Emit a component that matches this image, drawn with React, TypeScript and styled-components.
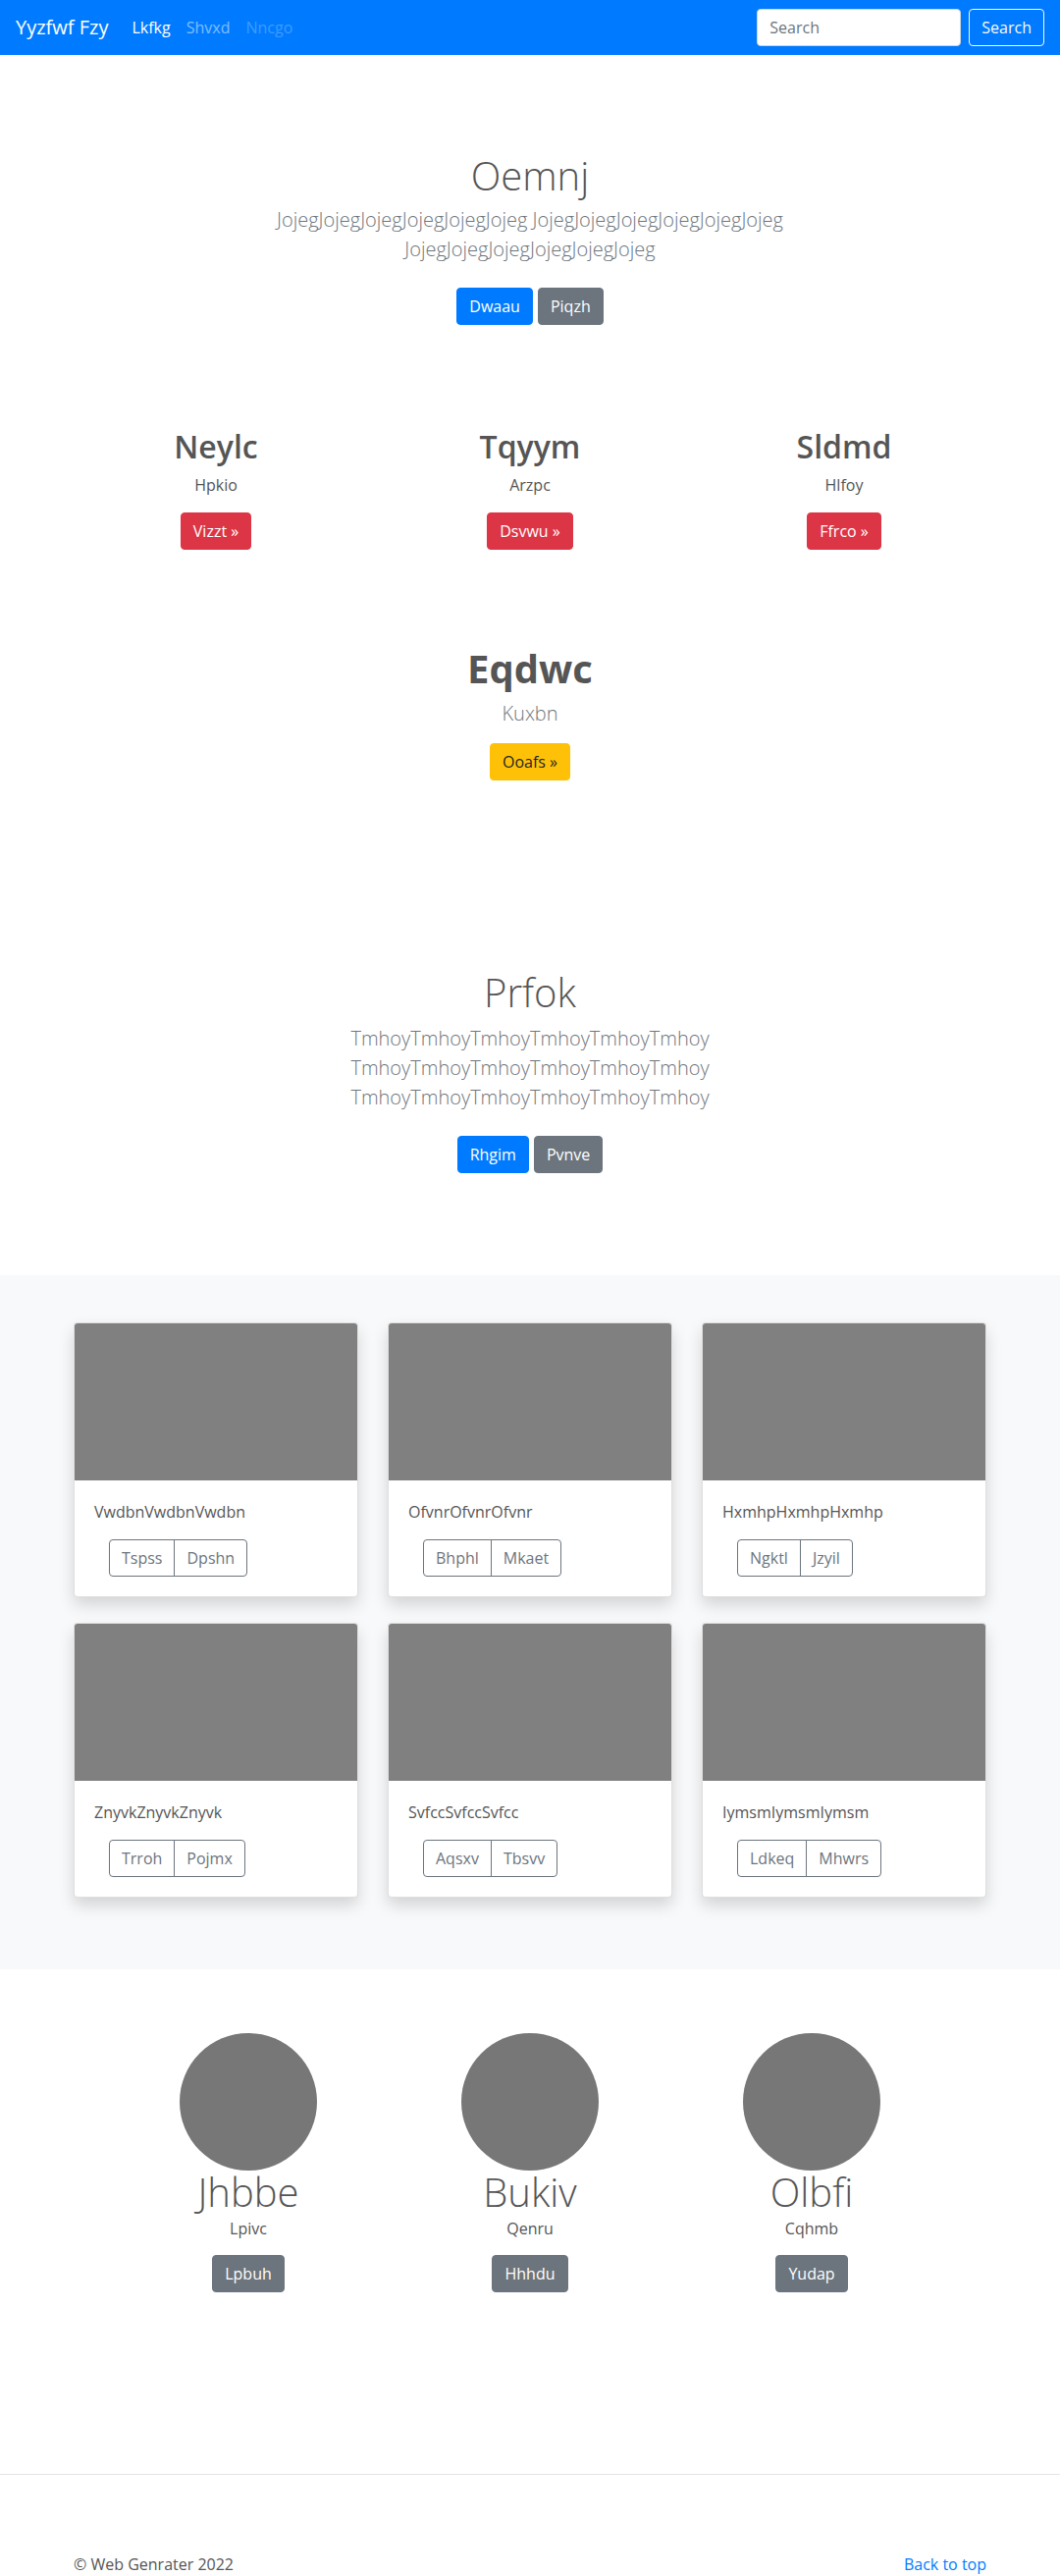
import React from "react";
import styled, { createGlobalStyle, css } from "styled-components";

const GlobalStyle = createGlobalStyle`
  * { box-sizing: border-box; }
  html, body { margin: 0; padding: 0; }
  body {
    font-family: "Segoe UI", "Open Sans", "Noto Sans", Arial, sans-serif;
    font-size: 16px;
    line-height: 1.5;
    color: #555555;
    background: #ffffff;
  }
`;

const Page = styled.div`
  width: 100%;
  min-height: 2624px;
  overflow: hidden;
`;

/* ---------- Navbar ---------- */
const Navbar = styled.nav`
  height: 56px;
  background: #007bff;
  display: flex;
  align-items: center;
  padding: 8px 16px;
`;

const Brand = styled.a`
  font-size: 20px;
  line-height: 30px;
  color: #ffffff;
  margin-right: 16px;
  text-decoration: none;
`;

const NavLinks = styled.div`
  display: flex;
  flex: 1;
`;

const NavLink = styled.a<{ $state?: "active" | "normal" | "disabled" }>`
  padding: 8px;
  font-size: 16px;
  text-decoration: none;
  color: ${(p) =>
    p.$state === "active"
      ? "#ffffff"
      : p.$state === "disabled"
      ? "rgba(255,255,255,0.25)"
      : "rgba(255,255,255,0.5)"};
`;

const SearchForm = styled.form`
  display: flex;
  align-items: center;
  gap: 8px;
`;

const SearchInput = styled.input`
  width: 208px;
  height: 38px;
  padding: 6px 12px;
  font-family: inherit;
  font-size: 16px;
  color: #495057;
  border: 1px solid #ced4da;
  border-radius: 4px;
  background: #fff;
  &::placeholder { color: #6c757d; }
`;

const OutlineLightButton = styled.button`
  height: 38px;
  padding: 6px 12px;
  font-family: inherit;
  font-size: 16px;
  line-height: 24px;
  color: #f8f9fa;
  background: transparent;
  border: 1px solid #f8f9fa;
  border-radius: 4px;
`;

/* ---------- Generic ---------- */
const Container = styled.div<{ $narrow?: boolean }>`
  width: ${(p) => (p.$narrow ? "610px" : "930px")};
  margin: 0 auto;
`;

const variants = {
  primary: css`background:#007bff;border-color:#007bff;color:#fff;`,
  secondary: css`background:#6c757d;border-color:#6c757d;color:#fff;`,
  danger: css`background:#dc3545;border-color:#dc3545;color:#fff;`,
  warning: css`background:#ffc107;border-color:#ffc107;color:#212529;`,
};

const Button = styled.a<{ $variant: keyof typeof variants }>`
  display: inline-block;
  height: 38px;
  padding: 6px 12px;
  font-size: 16px;
  line-height: 24px;
  border: 1px solid transparent;
  border-radius: 4px;
  text-decoration: none;
  ${(p) => variants[p.$variant]}
`;

const ButtonRow = styled.div`
  display: flex;
  justify-content: center;
  gap: 5px;
`;

/* ---------- Hero ---------- */
const Hero = styled.section<{ $top: number }>`
  padding-top: ${(p) => p.$top}px;
  text-align: center;
`;

const HeroTitle = styled.h1`
  margin: 0 0 6px;
  font-size: 40px;
  line-height: 48px;
  font-weight: 300;
  color: #555;
`;

const Lead = styled.p<{ $mb?: number }>`
  margin: 0 0 ${(p) => p.$mb ?? 24}px;
  font-size: 20px;
  line-height: 30px;
  font-weight: 300;
  color: #6c757d;
`;

/* ---------- Features ---------- */
const Features = styled.section`
  padding-top: 105px;
`;

const FeatureRow = styled.div`
  display: grid;
  grid-template-columns: repeat(3, 1fr);
  column-gap: 30px;
  text-align: center;
`;

const Feature = styled.div`
  display: flex;
  flex-direction: column;
  align-items: center;
`;

const FeatureTitle = styled.h2`
  margin: 0 0 8px;
  font-size: 32px;
  line-height: 38px;
  font-weight: 600;
  color: #555;
`;

const FeatureText = styled.p`
  margin: 0 0 16px;
  font-size: 16px;
  line-height: 24px;
`;

/* ---------- Highlight ---------- */
const Highlight = styled.section`
  padding-top: 97px;
  text-align: center;
`;

const HighlightTitle = styled.h1`
  margin: 0 0 7px;
  font-size: 40px;
  line-height: 48px;
  font-weight: 700;
  color: #555;
`;

/* ---------- Album ---------- */
const Album = styled.section`
  margin-top: 104px;
  background: #f8f9fa;
  padding: 48px 0 73px;
`;

const CardGrid = styled.div`
  display: grid;
  grid-template-columns: repeat(3, 290px);
  column-gap: 30px;
  row-gap: 26px;
`;

const Card = styled.div`
  background: #fff;
  border: 1px solid rgba(0, 0, 0, 0.125);
  border-radius: 4px;
  overflow: hidden;
  box-shadow: 0 8px 16px rgba(0, 0, 0, 0.15);
  height: 280px;
`;

const CardImage = styled.div`
  height: 160px;
  background: #808080;
`;

const CardBody = styled.div`
  padding: 20px;
`;

const CardText = styled.p`
  margin: 0 0 16px;
  font-size: 16px;
  line-height: 24px;
`;

const BtnGroup = styled.div`
  display: inline-flex;
  margin-left: 15px;
`;

const GroupButton = styled.button`
  height: 38px;
  padding: 6px 12px;
  font-family: inherit;
  font-size: 16px;
  line-height: 24px;
  color: #6c757d;
  background: transparent;
  border: 1px solid #6c757d;
  &:first-child { border-radius: 4px 0 0 4px; }
  &:last-child { border-radius: 0 4px 4px 0; margin-left: -1px; }
`;

/* ---------- Team ---------- */
const Team = styled.section`
  padding-top: 65px;
`;

const TeamGrid = styled.div`
  display: grid;
  grid-template-columns: repeat(3, 287px);
  justify-content: center;
  text-align: center;
`;

const Member = styled.div`
  display: flex;
  flex-direction: column;
  align-items: center;
`;

const Avatar = styled.div`
  width: 140px;
  height: 140px;
  border-radius: 50%;
  background: #777777;
`;

const MemberName = styled.h2`
  margin: 0 0 3px;
  font-size: 40px;
  line-height: 44px;
  font-weight: 300;
  color: #555;
`;

const MemberRole = styled.p`
  margin: 0 0 15px;
  font-size: 16px;
  line-height: 24px;
`;

/* ---------- Footer ---------- */
const Footer = styled.footer`
  margin-top: 185px;
  border-top: 1px solid #e5e5e5;
  padding-top: 79px;
`;

const FooterInner = styled.div`
  display: flex;
  justify-content: space-between;
  font-size: 16px;
  line-height: 24px;
  color: #555;
`;

const FooterLink = styled.a`
  color: #007bff;
  text-decoration: none;
`;

const features = [
  { title: "Neylc", text: "Hpkio", btn: "Vizzt »" },
  { title: "Tqyym", text: "Arzpc", btn: "Dsvwu »" },
  { title: "Sldmd", text: "Hlfoy", btn: "Ffrco »" },
];

const cards = [
  { text: "VwdbnVwdbnVwdbn", a: "Tspss", b: "Dpshn" },
  { text: "OfvnrOfvnrOfvnr", a: "Bhphl", b: "Mkaet" },
  { text: "HxmhpHxmhpHxmhp", a: "Ngktl", b: "Jzyil" },
  { text: "ZnyvkZnyvkZnyvk", a: "Trroh", b: "Pojmx" },
  { text: "SvfccSvfccSvfcc", a: "Aqsxv", b: "Tbsvv" },
  { text: "IymsmIymsmIymsm", a: "Ldkeq", b: "Mhwrs" },
];

const team = [
  { name: "Jhbbe", role: "Lpivc", btn: "Lpbuh" },
  { name: "Bukiv", role: "Qenru", btn: "Hhhdu" },
  { name: "Olbfi", role: "Cqhmb", btn: "Yudap" },
];

const J = "JojegJojegJojegJojegJojegJojeg";
const T = "TmhoyTmhoyTmhoyTmhoyTmhoyTmhoy";

export default function App() {
  return (
    <Page>
      <GlobalStyle />
      <Navbar>
        <Brand href="#">Yyzfwf Fzy</Brand>
        <NavLinks>
          <NavLink $state="active" href="#">Lkfkg</NavLink>
          <NavLink $state="normal" href="#">Shvxd</NavLink>
          <NavLink $state="disabled" href="#">Nncgo</NavLink>
        </NavLinks>
        <SearchForm onSubmit={(e) => e.preventDefault()}>
          <SearchInput placeholder="Search" />
          <OutlineLightButton type="submit">Search</OutlineLightButton>
        </SearchForm>
      </Navbar>

      <Hero $top={99}>
        <Container $narrow>
          <HeroTitle>Oemnj</HeroTitle>
          <Lead $mb={24}>{`${J} ${J} ${J}`}</Lead>
          <ButtonRow>
            <Button $variant="primary" href="#">Dwaau</Button>
            <Button $variant="secondary" href="#">Piqzh</Button>
          </ButtonRow>
        </Container>
      </Hero>

      <Features>
        <Container>
          <FeatureRow>
            {features.map((f) => (
              <Feature key={f.title}>
                <FeatureTitle>{f.title}</FeatureTitle>
                <FeatureText>{f.text}</FeatureText>
                <Button $variant="danger" href="#">{f.btn}</Button>
              </Feature>
            ))}
          </FeatureRow>
        </Container>
      </Features>

      <Highlight>
        <HighlightTitle>Eqdwc</HighlightTitle>
        <Lead $mb={15}>Kuxbn</Lead>
        <Button $variant="warning" href="#">Ooafs »</Button>
      </Highlight>

      <Hero $top={192}>
        <Container $narrow>
          <HeroTitle style={{ marginBottom: 8 }}>Prfok</HeroTitle>
          <Lead $mb={24}>{`${T} ${T} ${T}`}</Lead>
          <ButtonRow>
            <Button $variant="primary" href="#">Rhgim</Button>
            <Button $variant="secondary" href="#">Pvnve</Button>
          </ButtonRow>
        </Container>
      </Hero>

      <Album>
        <Container>
          <CardGrid>
            {cards.map((c) => (
              <Card key={c.text}>
                <CardImage />
                <CardBody>
                  <CardText>{c.text}</CardText>
                  <BtnGroup>
                    <GroupButton type="button">{c.a}</GroupButton>
                    <GroupButton type="button">{c.b}</GroupButton>
                  </BtnGroup>
                </CardBody>
              </Card>
            ))}
          </CardGrid>
        </Container>
      </Album>

      <Team>
        <TeamGrid>
          {team.map((m) => (
            <Member key={m.name}>
              <Avatar />
              <MemberName>{m.name}</MemberName>
              <MemberRole>{m.role}</MemberRole>
              <Button $variant="secondary" href="#">{m.btn}</Button>
            </Member>
          ))}
        </TeamGrid>
      </Team>

      <Footer>
        <Container>
          <FooterInner>
            <span>© Web Genrater 2022</span>
            <FooterLink href="#">Back to top</FooterLink>
          </FooterInner>
        </Container>
      </Footer>
    </Page>
  );
}
